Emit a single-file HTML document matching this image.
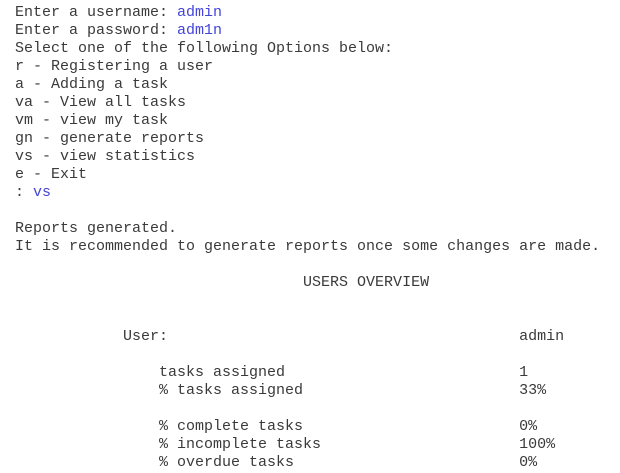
<!DOCTYPE html>
<html><head><style>
html,body{margin:0;padding:0;background:#fff;width:620px;height:473px;overflow:hidden}
pre{position:absolute;left:15px;top:4px;margin:0;font-family:"Liberation Mono",monospace;font-size:15px;line-height:18px;color:#3a3a3a}
.b{color:#4444d8}
</style></head><body>
<pre>Enter a username: <span class="b">admin</span>
Enter a password: <span class="b">adm1n</span>
Select one of the following Options below:
r - Registering a user
a - Adding a task
va - View all tasks
vm - view my task
gn - generate reports
vs - view statistics
e - Exit
: <span class="b">vs</span>

Reports generated.
It is recommended to generate reports once some changes are made.

                                USERS OVERVIEW


            User:                                       admin

                tasks assigned                          1
                % tasks assigned                        33%

                % complete tasks                        0%
                % incomplete tasks                      100%
                % overdue tasks                         0%</pre>
</body></html>
